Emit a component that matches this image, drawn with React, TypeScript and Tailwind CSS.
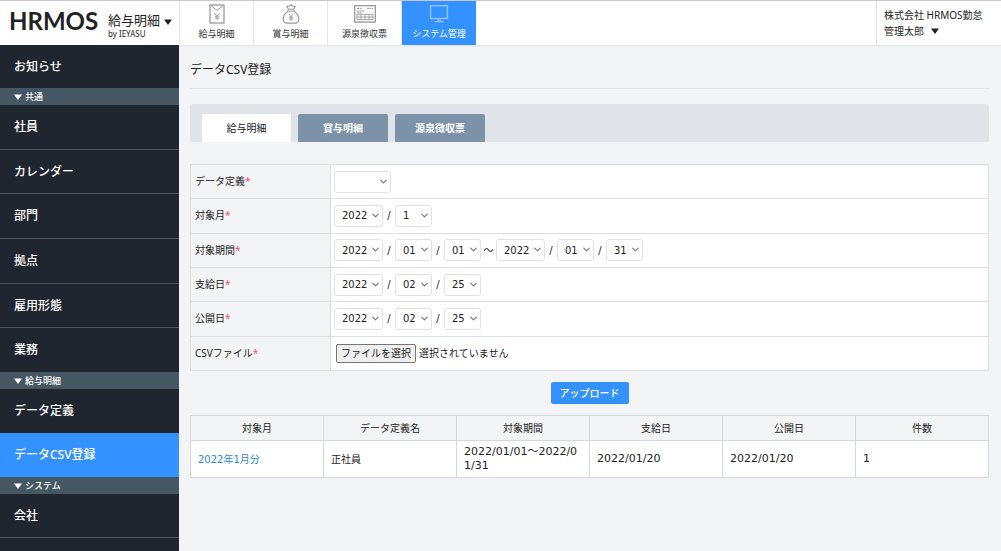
import type { ReactNode } from "react";
import { ChevronDown } from "lucide-react";

type NavItem = { label: string; icon: ReactNode; active?: boolean };

function PayslipIcon() {
  return (
    <svg width="16" height="20" viewBox="0 0 16 20" fill="none" stroke="currentColor">
      <rect x="1" y="1" width="14" height="18" strokeWidth="1.3" />
      <path d="M2 1.5 6.8 5.6q1.2 1 2.4 0L14 1.5" strokeWidth="1" />
      <path d="M5.7 9 8 12.2 10.3 9M8 12.2V16M5.8 12.4h4.4M5.8 14.2h4.4" strokeWidth="0.9" />
    </svg>
  );
}

function MoneyBagIcon() {
  return (
    <svg width="18" height="20" viewBox="0 0 18 20" fill="none" stroke="currentColor" strokeLinejoin="round">
      <path d="M6.5 5.2 4.6 2.3 7.2 2.2 9 .7l1.8 1.5 2.6.1-1.9 2.9" strokeWidth="1.1" />
      <rect x="5.8" y="5.2" width="6.4" height="1.9" rx="0.9" strokeWidth="1" />
      <path d="M6.2 7.2C3.2 9 1.2 12 1.2 15c0 2.8 1.8 4.2 4.3 4.2h7c2.5 0 4.3-1.4 4.3-4.2 0-3-2-6-5-7.8" strokeWidth="1.2" />
      <path d="M6.8 9.8 9 13l2.2-3.2M9 13v4M6.8 13.2h4.4M6.8 15h4.4" strokeWidth="0.9" />
    </svg>
  );
}

function WithholdingIcon() {
  return (
    <svg width="22" height="18" viewBox="0 0 22 18" fill="none" stroke="currentColor">
      <rect x="0.7" y="0.7" width="20.6" height="16.4" strokeWidth="1.3" />
      <path d="M3 3.4h5M3 6h7M13 3.4h6M3 7.8h5" strokeWidth="1" strokeDasharray="2 .5" />
      <path d="M3 9.3h16v5.4H3zM3 12h16M7 9.3v5.4M11 9.3v5.4M15 9.3v5.4" strokeWidth="0.9" />
    </svg>
  );
}

function MonitorIcon() {
  return (
    <svg width="20" height="18" viewBox="0 0 20 18" fill="none" stroke="currentColor">
      <rect x="1.6" y="0.7" width="16.8" height="12.8" strokeWidth="1.5" />
      <path d="M8 15.2h4M5.5 16.6h9" strokeWidth="1.2" />
    </svg>
  );
}

function Caret({ className }: { className: string }) {
  return (
    <svg width="8" height="6" viewBox="0 0 8 6" fill="currentColor" className={className} aria-hidden="true">
      <path d="M0 0.5h8L4 6z" />
    </svg>
  );
}

const navItems: NavItem[] = [
  { label: "給与明細", icon: <PayslipIcon /> },
  { label: "賞与明細", icon: <MoneyBagIcon /> },
  { label: "源泉徴収票", icon: <WithholdingIcon /> },
  { label: "システム管理", icon: <MonitorIcon />, active: true },
];

function Header() {
  return (
    <header className="flex h-[45px] shrink-0 border-t border-[#c9c9c9] bg-white shadow-[0_1px_2px_rgba(0,0,0,0.08)]">
      <button type="button" className="flex w-[180px] shrink-0 items-start border-r border-[#e2e4e6] pt-[8px] pl-[9px] text-left">
        <span className="w-[99px] font-['Lato',sans-serif] text-[24px] leading-6 font-bold text-[#222]">HRMOS</span>
        <span className="flex flex-col pt-[2px]">
          <span className="text-[13px] leading-[18px] text-[#222]">給与明細</span>
          <span className="text-[8px] leading-[10px] text-[#222]">by IEYASU</span>
        </span>
        <Caret className="mt-[10px] ml-1 text-[#222]" />
      </button>
      <nav className="flex">
        {navItems.map((item) => (
          <a
            key={item.label}
            href="#"
            className={
              item.active
                ? "flex w-[74px] flex-col items-center bg-[#3392ff] text-white"
                : "flex w-[74px] flex-col items-center border-r border-[#e2e4e6] text-[#333]"
            }
          >
            <span className={item.active ? "flex h-[26px] items-center text-[#8fc3ff]" : "flex h-[26px] items-center text-[#9a9a9a]"}>
              {item.icon}
            </span>
            <span className="text-[9px] leading-[14px]">{item.label}</span>
          </a>
        ))}
      </nav>
      <button type="button" className="ml-auto w-[125px] shrink-0 border-l border-[#dcdee0] pl-[7px] text-left text-[10px] leading-4 text-[#222]">
        <span className="block">株式会社 HRMOS勤怠</span>
        <span className="flex items-center">
          管理太郎
          <Caret className="ml-[7px]" />
        </span>
      </button>
    </header>
  );
}

function SideLink({ children, active = false }: { children: ReactNode; active?: boolean }) {
  return (
    <a
      href="#"
      className={
        active
          ? "flex flex-1 items-center bg-[#3392ff] pl-[14px] text-[12px] font-medium text-white"
          : "flex flex-1 items-center border-t border-[#4b535b] pl-[14px] text-[12px] font-medium text-white first:border-t-0"
      }
    >
      {children}
    </a>
  );
}

function SideHeading({ children }: { children: ReactNode }) {
  return (
    <h2 className="flex h-[17px] shrink-0 items-center bg-[#455763] pl-[14px] text-[9px] font-medium text-white">
      <Caret className="mr-[3px]" />
      {children}
    </h2>
  );
}

function Sidebar() {
  return (
    <aside className="flex w-[179px] shrink-0 flex-col bg-[#20262f]">
      <nav className="flex h-[43px] flex-col">
        <SideLink>お知らせ</SideLink>
      </nav>
      <SideHeading>共通</SideHeading>
      <nav className="flex h-[267px] flex-col">
        {["社員", "カレンダー", "部門", "拠点", "雇用形態", "業務"].map((label) => (
          <SideLink key={label}>{label}</SideLink>
        ))}
      </nav>
      <SideHeading>給与明細</SideHeading>
      <nav className="flex h-[88px] flex-col">
        <SideLink>データ定義</SideLink>
        <SideLink active>データCSV登録</SideLink>
      </nav>
      <SideHeading>システム</SideHeading>
      <nav className="flex h-[44px] flex-col border-b border-[#4b535b]">
        <SideLink>会社</SideLink>
      </nav>
    </aside>
  );
}

type Size = "wide" | "year" | "day";
const sizes: Record<Size, string> = { wide: "w-[57px]", year: "w-[49px]", day: "w-[37px]" };

function Select({ id, label, value, size }: { id?: string; label: string; value: string; size: Size }) {
  return (
    <span className={`relative flex ${sizes[size]}`}>
      <select
        id={id}
        aria-label={label}
        className="h-[22px] w-full appearance-none rounded-[3px] border border-[#dfe1e4] bg-white pl-[7px] font-['DejaVu_Sans',sans-serif] text-[10px] text-[#222]"
      >
        <option>{value}</option>
      </select>
      <ChevronDown className="pointer-events-none absolute top-[5px] right-[2px] size-[11px] text-[#777]" strokeWidth={2.5} />
    </span>
  );
}

function Slash() {
  return <span className="w-3 text-center font-['DejaVu_Sans',sans-serif] text-[10px]">/</span>;
}

function DateSelects({ id, name, year, month, day }: { id?: string; name: string; year: string; month: string; day?: string }) {
  return (
    <>
      <Select id={id} label={`${name} 年`} value={year} size="year" />
      <Slash />
      <Select label={`${name} 月`} value={month} size="day" />
      {day && (
        <>
          <Slash />
          <Select label={`${name} 日`} value={day} size="day" />
        </>
      )}
    </>
  );
}

function FormRow({ id, label, children }: { id: string; label: string; children: ReactNode }) {
  return (
    <tr className="h-[34px]">
      <th scope="row" className="w-[140px] border border-[#dcdfe2] bg-[#f3f4f6] px-1 text-left font-normal">
        <label htmlFor={id}>
          {label}
          <span className="text-[#f2556b]">*</span>
        </label>
      </th>
      <td className="border border-[#dcdfe2] bg-white px-[3px]">
        <div className="flex items-center">{children}</div>
      </td>
    </tr>
  );
}

function UploadForm() {
  return (
    <form className="flex flex-col items-center">
      <table className="h-[207px] w-full border-collapse text-[10px]">
        <tbody>
          <FormRow id="definition" label="データ定義">
            <Select id="definition" label="データ定義" value="" size="wide" />
          </FormRow>
          <FormRow id="month" label="対象月">
            <DateSelects id="month" name="対象月" year="2022" month="1" />
          </FormRow>
          <FormRow id="period" label="対象期間">
            <DateSelects id="period" name="開始" year="2022" month="01" day="01" />
            <span className="w-[15px] text-center">〜</span>
            <DateSelects name="終了" year="2022" month="01" day="31" />
          </FormRow>
          <FormRow id="payday" label="支給日">
            <DateSelects id="payday" name="支給日" year="2022" month="02" day="25" />
          </FormRow>
          <FormRow id="publish" label="公開日">
            <DateSelects id="publish" name="公開日" year="2022" month="02" day="25" />
          </FormRow>
          <FormRow id="csv" label="CSVファイル">
            <input id="csv" type="file" accept=".csv" className="sr-only" />
            <label htmlFor="csv" className="ml-[2px] flex items-center gap-[3px]">
              <span className="flex h-[19px] w-20 items-center justify-center rounded-[2px] border border-[#767676] bg-[#efefef]">
                ファイルを選択
              </span>
              選択されていません
            </label>
          </FormRow>
        </tbody>
      </table>
      <button type="submit" className="mt-[11px] h-[22px] w-[78px] rounded-[2px] bg-[#3392ff] text-[10px] font-medium text-white">
        アップロード
      </button>
    </form>
  );
}

const columns = ["対象月", "データ定義名", "対象期間", "支給日", "公開日", "件数"];

function ResultTable() {
  const cell = "border border-[#d5d8dc] px-[7px] break-all";
  const numeric = `${cell} font-['DejaVu_Sans','Noto_Sans_CJK_JP',sans-serif] text-[11px]`;
  return (
    <table className="mt-[11px] w-full table-fixed border-collapse text-[10px] leading-[14px]">
      <thead>
        <tr className="h-[25px] bg-[#f3f4f6]">
          {columns.map((c) => (
            <th key={c} scope="col" className="border border-[#d5d8dc] text-center font-normal">
              {c}
            </th>
          ))}
        </tr>
      </thead>
      <tbody>
        <tr className="h-[37px] bg-white">
          <td className={cell}>
            <a href="#" className="font-['DejaVu_Sans','Noto_Sans_CJK_JP',sans-serif] text-[#2b87dd]">
              2022年1月分
            </a>
          </td>
          <td className={cell}>正社員</td>
          <td className={numeric}>2022/01/01〜2022/01/31</td>
          <td className={numeric}>2022/01/20</td>
          <td className={numeric}>2022/01/20</td>
          <td className={numeric}>1</td>
        </tr>
      </tbody>
    </table>
  );
}

function Tabs() {
  return (
    <div role="tablist" className="mt-[15px] flex h-[38px] items-end gap-[7px] rounded-[2px] bg-[#e0e4e9] pl-3 text-[10px]">
      <button type="button" role="tab" aria-selected="true" className="h-7 w-[89px] rounded-t-[2px] bg-white text-[#222]">
        給与明細
      </button>
      {["賞与明細", "源泉徴収票"].map((label) => (
        <button key={label} type="button" role="tab" aria-selected="false" className="h-7 w-[90px] rounded-t-[2px] bg-[#7b92a8] font-bold text-white">
          {label}
        </button>
      ))}
    </div>
  );
}

export default function App() {
  return (
    <div lang="ja" className="flex min-h-screen flex-col bg-[#f3f4f6] font-['Noto_Sans','Noto_Sans_CJK_JP',sans-serif] text-[#222]">
      <Header />
      <div className="flex flex-1">
        <Sidebar />
        <main className="min-w-0 flex-1 pr-3 pl-[11px]">
          <h1 className="flex h-11 items-center border-b border-[#e0e2e5] pt-[7px] text-[12px]">データCSV登録</h1>
          <Tabs />
          <div className="mt-[22px]">
            <UploadForm />
            <ResultTable />
          </div>
        </main>
      </div>
    </div>
  );
}
